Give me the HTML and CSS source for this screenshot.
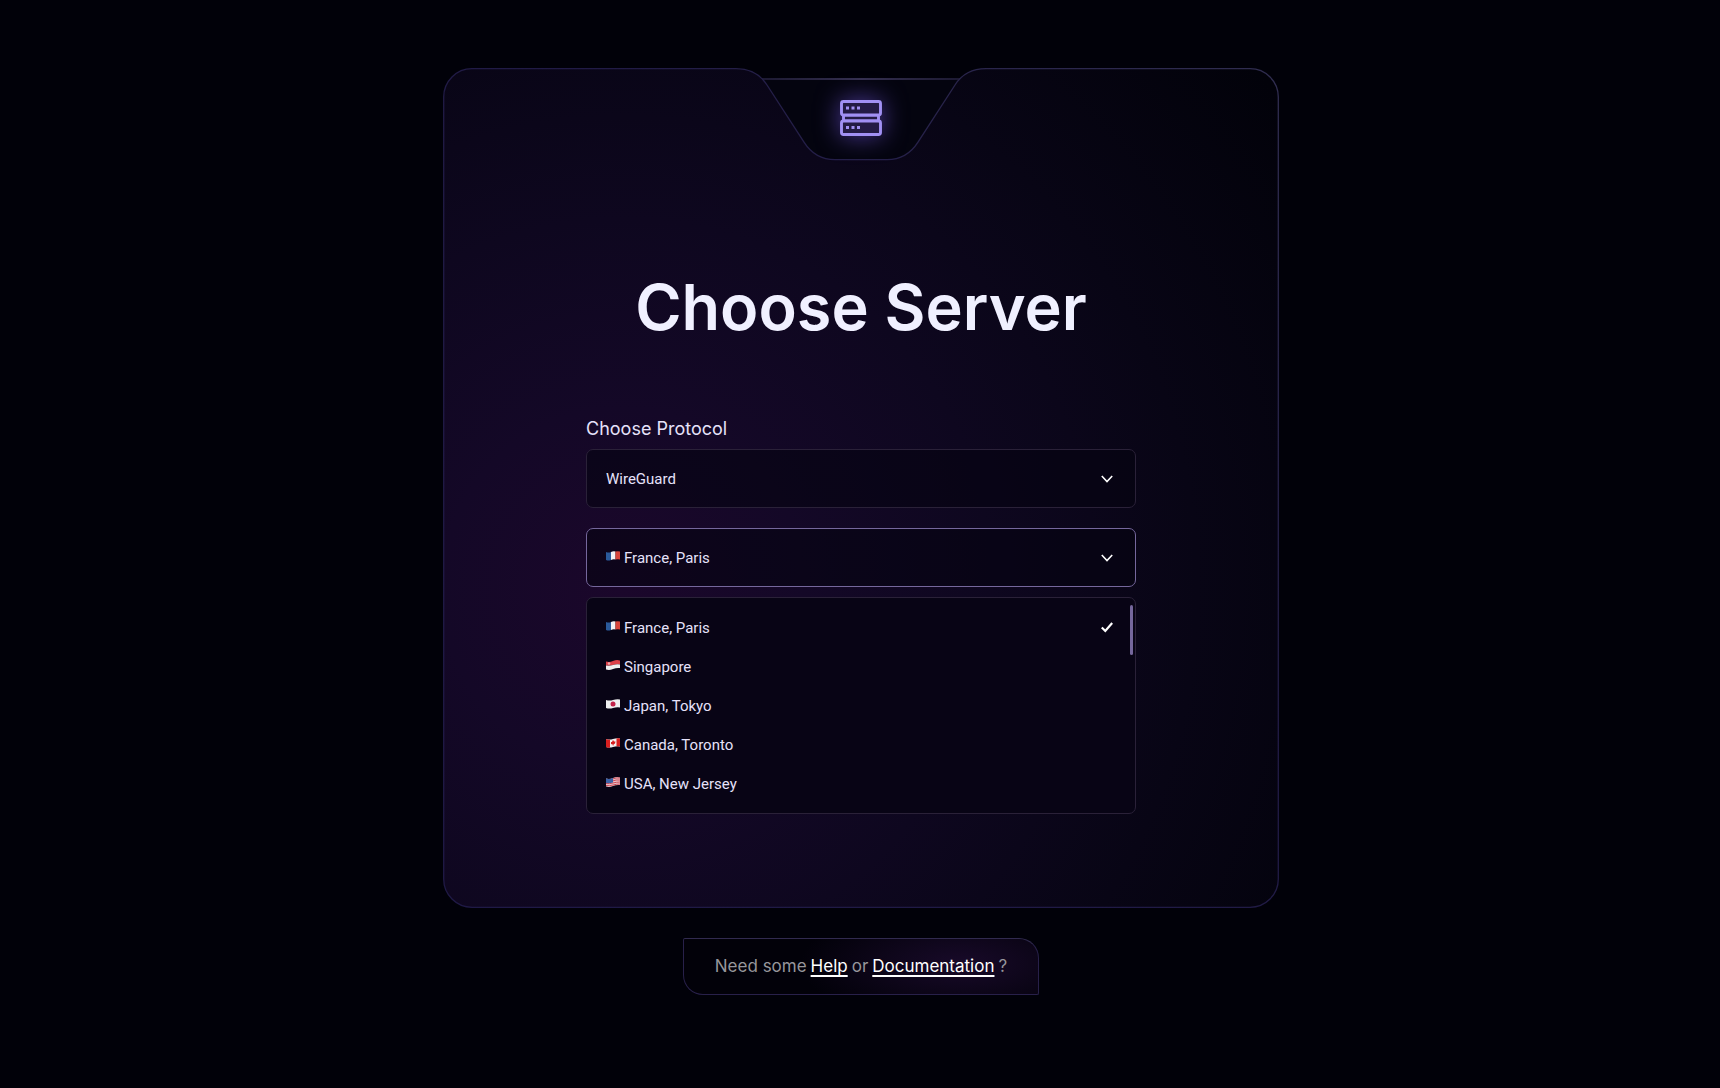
FILE: index.html
```html
<!DOCTYPE html>
<html lang="en">
<head>
    <meta charset="UTF-8">
    <meta name="viewport" content="width=device-width, initial-scale=1.0">
    <title>Choose Server</title>
    <link rel="stylesheet" href="styles.css">
</head>
<body>
    <!-- Flag symbols -->
    <svg class="symbols" aria-hidden="true">
        <symbol id="flag-fr" viewBox="0 0 28 20">
            <path fill="#2a5a9b" d="M0 2Q5 4 10 2V18Q5 20 0 18Z"/>
            <path fill="#f3f3f5" d="M10 2Q14 0 19 1V17Q14 16 10 18Z"/>
            <path fill="#d9463c" d="M19 1Q24 0 28 1V17Q24 16 19 17Z"/>
        </symbol>
        <symbol id="flag-sg" viewBox="0 0 28 20">
            <path fill="#dc4048" d="M0 3Q7 5 14 2T28 1V9Q21 8 14 10T0 11Z"/>
            <path fill="#efefef" d="M0 11Q7 12 14 10T28 9V16Q21 15 14 18T0 19Z"/>
            <circle cx="6" cy="7" r="2.5" fill="#f3a8ab"/>
        </symbol>
        <symbol id="flag-jp" viewBox="0 0 28 20">
            <path fill="#efeff0" d="M0 2Q7 4 14 2T28 1V17Q21 16 14 18T0 18Z"/>
            <circle cx="14" cy="10" r="5" fill="#c2234a"/>
        </symbol>
        <symbol id="flag-ca" viewBox="0 0 28 20">
            <path fill="#f3f1f1" d="M0 2Q7 4 14 2T28 1V17Q21 16 14 18T0 18Z"/>
            <path fill="#d81f1f" d="M0 2Q4 4 8 3V19Q4 20 0 18ZM21 1Q25 0 28 1V17Q25 16 21 17ZM14 4L16 7L19 7L18 11L15 13V15H13.500V13L10 12L10 8L12 8Z"/>
        </symbol>
        <symbol id="flag-us" viewBox="0 0 28 20">
            <path fill="#e9c5cb" d="M0 3Q7 5 14 2T28 1V16Q21 15 14 18T0 19Z"/>
            <path fill="none" stroke="#cc4855" stroke-width="2" d="M13 4Q20 1 28 2M13 8Q20 5 28 6M0 13Q7 14 14 12T28 10M0 17Q7 18 14 16T28 14"/>
            <path fill="#3d62a6" d="M0 3Q7 5 14 2V11Q7 13 0 12Z"/>
        </symbol>
        <symbol id="chevron" viewBox="0 0 12 8">
            <path fill="none" stroke="#fff" stroke-width="1.600" d="M.8 1L6 6.500L11.200 1"/>
        </symbol>
    </svg>

    <main class="page">
        <section class="card">
            <svg class="card-shape" viewBox="0 0 836 839" preserveAspectRatio="none" aria-hidden="true">
                <defs>
                    <radialGradient id="cardFill" gradientUnits="userSpaceOnUse" cx="180" cy="520" r="820">
                        <stop offset="0" stop-color="#1b072b"/>
                        <stop offset=".22" stop-color="#140827"/>
                        <stop offset=".45" stop-color="#0e071f"/>
                        <stop offset=".7" stop-color="#080515"/>
                        <stop offset="1" stop-color="#02020a"/>
                    </radialGradient>
                    <linearGradient id="cardStroke" x1="0" y1="1" x2="1" y2="0">
                        <stop offset="0" stop-color="#1f1946"/>
                        <stop offset=".6" stop-color="#211b46"/>
                        <stop offset="1" stop-color="#302d50"/>
                    </linearGradient>
                    <linearGradient id="tabStroke" gradientUnits="userSpaceOnUse" x1="318" y1="0" x2="518" y2="0">
                        <stop offset="0" stop-color="#1c1932"/>
                        <stop offset=".5" stop-color="#35304f"/>
                        <stop offset="1" stop-color="#1c1932"/>
                    </linearGradient>
                </defs>
                <path fill="#04040f" d="M318 10H518L470 92H366Z"/>
                <path fill="url(#tabStroke)" d="M318 10H518V12H318Z"/>
                <path fill="url(#cardFill)" stroke="url(#cardStroke)" stroke-width="1.3" d="M29 .7H293C306 .7 317 6 324 17L361 74C368 85 379 91.500 392 91.500H444C457 91.500 468 85 475 74L512 17C519 6 530 .7 543 .7H807A28.300 28.300 0 0 1 835.300 29V810A28.300 28.300 0 0 1 807 838.300H29A28.300 28.300 0 0 1 .7 810V29A28.300 28.300 0 0 1 29 .7Z"/>
            </svg>

            <svg class="server-icon" viewBox="0 0 42 36" aria-hidden="true">
                <g fill="#241b45" stroke="#a190f3" stroke-width="2.900">
                    <path d="M3.500 15H38.500V21H3.500Z"/>
                    <rect x="1.500" y="1.500" width="39" height="13.500" rx="2"/>
                    <rect x="1.500" y="21" width="39" height="13.500" rx="2"/>
                </g>
                <path fill="#a190f3" d="M6 6.500H9V9.500H6ZM11.500 6.500H14.500V9.500H11.500ZM17 6.500H20V9.500H17ZM6 26H9V29H6ZM11.500 26H14.500V29H11.500ZM17 26H20V29H17Z"/>
            </svg>

            <h1 class="title">Choose Server</h1>

            <form class="form">
                <label class="label" for="protocol">Choose Protocol</label>
                <div class="field">
                    <select id="protocol" class="select">
                        <option>WireGuard</option>
                    </select>
                    <svg class="chevron"><use href="#chevron"/></svg>
                </div>

                <div class="field">
                    <select id="server" class="select with-flag active" aria-label="Choose Server">
                        <option>France, Paris</option>
                        <option>Singapore</option>
                        <option>Japan, Tokyo</option>
                        <option>Canada, Toronto</option>
                        <option>USA, New Jersey</option>
                    </select>
                    <svg class="flag select-flag"><use href="#flag-fr"/></svg>
                    <svg class="chevron"><use href="#chevron"/></svg>
                </div>

                <!-- Opened server list -->
                <div class="options">
                    <label class="option">
                        <input type="radio" name="location" checked>
                        <svg class="flag"><use href="#flag-fr"/></svg>
                        <span>France, Paris</span>
                        <svg class="check" viewBox="0 0 12 11"><path fill="none" stroke="#fff" stroke-width="2.200" d="M.8 5.500L4.300 9L11.200 1"/></svg>
                    </label>
                    <label class="option">
                        <input type="radio" name="location">
                        <svg class="flag"><use href="#flag-sg"/></svg>
                        <span>Singapore</span>
                    </label>
                    <label class="option">
                        <input type="radio" name="location">
                        <svg class="flag"><use href="#flag-jp"/></svg>
                        <span>Japan, Tokyo</span>
                    </label>
                    <label class="option">
                        <input type="radio" name="location">
                        <svg class="flag"><use href="#flag-ca"/></svg>
                        <span>Canada, Toronto</span>
                    </label>
                    <label class="option">
                        <input type="radio" name="location">
                        <svg class="flag"><use href="#flag-us"/></svg>
                        <span>USA, New Jersey</span>
                    </label>
                    <div class="scroll-thumb"></div>
                </div>
            </form>
        </section>

        <footer class="help">
            <span>Need some</span>
            <a href="#">Help</a>
            <span>or</span>
            <a href="#">Documentation</a>
            <span>?</span>
        </footer>
    </main>
</body>
</html>
```

FILE: styles.css
```css
* {
    box-sizing: border-box;
}

body {
    margin: 0;
    min-height: 100vh;
    background-color: #010109;
    color: #e6e2fa;
    font-family: Inter, sans-serif;
}

.symbols {
    display: none;
}

.page {
    display: flex;
    flex-direction: column;
    align-items: center;
    gap: 30px;
    padding: 68px 14px 68px 16px;
}

/* Card */
.card {
    position: relative;
    display: flex;
    flex-direction: column;
    align-items: center;
    width: 100%;
    max-width: 836px;
    padding: 32px 24px 94px;
}

/* notched outline sits under the card content */
.card-shape {
    position: absolute;
    top: 0;
    left: 0;
    width: 100%;
    height: 100%;
    z-index: -1;
}

.server-icon {
    width: 42px;
    height: 36px;
    filter: drop-shadow(0 0 12px #4a3894);
}

.title {
    margin: 131px 0 70px;
    font-size: 63px;
    font-weight: 600;
    line-height: 80px;
    color: #f0f0ff;
}

/* Form */
.form {
    display: flex;
    flex-direction: column;
    width: 100%;
    max-width: 550px;
}

.label {
    margin-bottom: 9px;
    font-size: 18px;
    line-height: 23px;
}

.field {
    position: relative;
    margin-bottom: 20px;
}

.select {
    appearance: none;
    display: block;
    width: 100%;
    height: 59px;
    padding: 0 50px 0 19px;
    background-color: rgba(5, 4, 16, 0.6);
    border: 1px solid #2a2138;
    border-radius: 7px;
    color: #e6e2fa;
    font-family: Roboto, sans-serif;
    font-size: 15px;
}

.select.with-flag {
    padding-left: 37px;
}

.select.active {
    border-color: #75679c;
}

.flag {
    width: 14px;
    height: 10px;
}

.select-flag {
    position: absolute;
    left: 20px;
    top: 23px;
}

.chevron {
    position: absolute;
    right: 23px;
    top: 26px;
    width: 12px;
    height: 8px;
    pointer-events: none;
}

.options {
    position: relative;
    margin-top: -10px;
    padding: 10px 0;
    background-color: #080415;
    border: 1px solid #2a2138;
    border-radius: 7px;
}

.option {
    display: flex;
    align-items: center;
    gap: 4px;
    height: 39px;
    padding: 0 22px 0 19px;
    font-family: Roboto, sans-serif;
    font-size: 15px;
    cursor: pointer;
}

.option input {
    appearance: none;
    position: absolute;
    margin: 0;
}

.option .flag {
    margin-bottom: 4px;
}

.check {
    width: 12px;
    height: 11px;
    margin-left: auto;
}

.scroll-thumb {
    position: absolute;
    top: 7px;
    right: 2px;
    width: 3px;
    height: 50px;
    background-color: #75679c;
    border-radius: 2px;
}

/* Footer */
.help {
    display: flex;
    gap: 4px;
    padding: 16px 31px;
    background: radial-gradient(ellipse 160px 60px at 78% 45%, #180a29, #020109);
    border: 1px solid #28204a;
    border-top-color: #312a4f;
    border-radius: 2px 20px 2px 20px;
    color: #97969b;
    font-size: 17px;
    line-height: 23px;
}

.help a {
    color: #fff;
    text-decoration: underline;
    text-decoration-thickness: 2px;
    text-underline-offset: 3px;
    text-decoration-skip-ink: none;
}
```
